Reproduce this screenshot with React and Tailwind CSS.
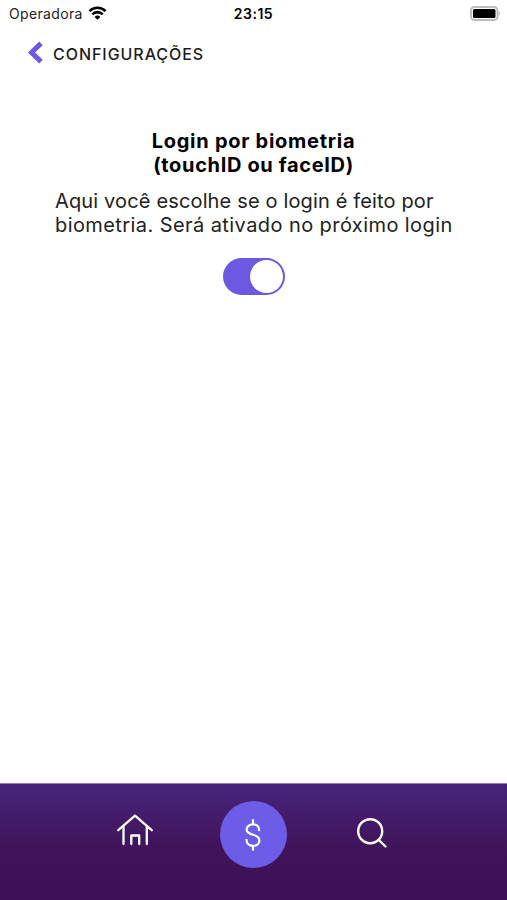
import React, { useState } from 'react';

const StatusBar = () => (
  <div className="h-[27px] pl-[9px] pr-[6px] grid grid-cols-3 items-center text-black">
    <div className="flex items-center gap-[5px]">
      <span className="text-[14px] tracking-[0.35px] text-[#222]">Operadora</span>
      <svg className="w-[19px] h-[14px] -mt-px" viewBox="0 0 18 14" fill="none" stroke="currentColor" strokeWidth="2.6">
        <path d="M1 5.1a11.4 11.4 0 0 1 16 0M3.8 8.3a7.4 7.4 0 0 1 10.4 0" />
        <path d="M9 13.8l-2.9-2.9a4.1 4.1 0 0 1 5.8 0z" fill="currentColor" stroke="none" />
      </svg>
    </div>
    <span className="-ml-[3px] text-center text-[14px] font-semibold tracking-[0.5px]">23:15</span>
    <svg className="w-[31px] h-[15px] justify-self-end" viewBox="0 0 31 15" fill="none">
      <rect x="1" y="1" width="26.5" height="13" rx="3.5" stroke="#bdbdbd" strokeWidth="2" />
      <rect x="3" y="3" width="22.5" height="9" rx="1.5" fill="#000" />
      <path d="M28.5 5.2c2 .6 2 4 0 4.6z" fill="#bdbdbd" />
    </svg>
  </div>
);

const Header = () => (
  <header className="h-[53px] pl-[27px] flex items-center">
    <button type="button" aria-label="Voltar" className="-mt-[3px]">
      <svg className="w-4 h-[23px]" viewBox="0 0 16 23" fill="none" stroke="#6f59e4" strokeWidth="5">
        <path d="M14 2.4L4.5 11.5L14 20.6" />
      </svg>
    </button>
    <h1 className="ml-[10px] text-[16px] font-[450] tracking-[0.95px] text-[#1c1c1c]">CONFIGURAÇÕES</h1>
  </header>
);

const Toggle = ({ checked, onChange }) => (
  <button
    type="button"
    role="switch"
    aria-checked={checked}
    aria-label="Login por biometria"
    onClick={() => onChange(!checked)}
    className={`w-[62px] h-[37px] p-[2px] rounded-full flex items-center ${checked ? 'justify-end bg-[#6b59e2]' : 'justify-start bg-gray-300'}`}
  >
    <span className="w-[33px] h-[33px] rounded-full bg-white" />
  </button>
);

const BottomNav = () => (
  <nav className="h-[117px] pr-1 flex justify-center bg-linear-to-b from-[#48227a] from-5% via-[#401459] via-55% to-[#3d1057] border-t border-[#8f80ab] text-white">
    <button type="button" aria-label="Início" className="w-9 h-8 mt-[30px]">
      <svg className="w-9 h-8" viewBox="0 0 36 32" fill="none" stroke="currentColor" strokeWidth="2.3" strokeLinecap="round" strokeLinejoin="round">
        <path d="M1.3 16.2L18 1.6L34.7 16.2" />
        <path d="M6.5 13V30M29.8 13V30" />
        <path d="M14.3 30V21.5H22.2V30" />
      </svg>
    </button>
    <button type="button" aria-label="Pagamentos" className="w-[67px] h-[67px] mt-[17px] ml-[67px] mr-[70px] rounded-full bg-[#6c5ce7] flex items-center justify-center">
      <svg className="w-4 h-8" viewBox="0 0 16 32" fill="none" stroke="currentColor" strokeWidth="2.2" strokeLinecap="round">
        <path d="M8 1.2V5M8 27V30.8" />
        <path d="M14.2 11.2C14.2 7.6 11.6 5.3 8 5.3S1.6 7.6 1.6 10.6C1.6 13.3 3.4 14.6 8 15.8S14.4 18.6 14.4 21.4C14.4 24.6 11.8 26.8 8 26.8S1.5 24.6 1.5 20.8" />
      </svg>
    </button>
    <button type="button" aria-label="Buscar" className="w-[30px] h-[31px] mt-[34px]">
      <svg className="w-[30px] h-[31px]" viewBox="0 0 30 31" fill="none" stroke="currentColor" strokeWidth="2.4" strokeLinecap="round">
        <circle cx="13.2" cy="13.2" r="12" />
        <path d="M21.8 22L28.5 28.5" />
      </svg>
    </button>
  </nav>
);

const App = () => {
  const [biometria, setBiometria] = useState(true);

  return (
    <div className="w-full h-screen flex flex-col overflow-hidden bg-white font-['Inter',sans-serif]">
      <StatusBar />
      <Header />
      <main className="flex-grow pt-[49px] flex flex-col">
        <h2 className="text-center text-[20px] leading-6 font-bold text-black">
          <span className="block tracking-[0.74px]">Login por biometria</span>
          <span className="block tracking-[0.65px]">(touchID ou faceID)</span>
        </h2>
        <p className="pl-[55px] mt-[12px] text-[20px] leading-6 text-[#222] whitespace-nowrap">
          <span className="block tracking-[0.15px]">Aqui você escolhe se o login é feito por</span>
          <span className="block tracking-[0.42px]">biometria. Será ativado no próximo login</span>
        </p>
        <div className="mt-[21px] pl-px flex justify-center">
          <Toggle checked={biometria} onChange={setBiometria} />
        </div>
      </main>
      <BottomNav />
    </div>
  );
};

export default App;
